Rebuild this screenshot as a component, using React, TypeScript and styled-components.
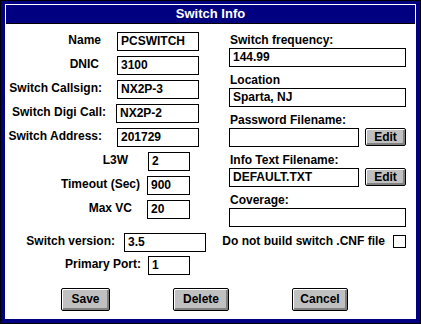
import React from "react";
import styled, { createGlobalStyle } from "styled-components";

const Global = createGlobalStyle`
  html, body { margin: 0; padding: 0; background: #ffffff; }
  body { font-family: "Liberation Sans", Arial, sans-serif; }
  * { box-sizing: border-box; }
`;

const Window = styled.div`
  width: 421px;
  height: 324px;
  border: 1px solid #000;
  background: #000080;
  padding: 3px 4px 4px 4px;
  display: flex;
`;

const Frame = styled.div`
  flex: 1;
  border: 1px solid #fff;
  background: #fff;
  display: flex;
  flex-direction: column;
`;

const TitleBar = styled.div`
  height: 19px;
  background: #000080;
  border-bottom: 1px solid #000;
  color: #fff;
  font-weight: bold;
  font-size: 13px;
  line-height: 18px;
  text-align: center;
`;

const Body = styled.div`
  flex: 1;
  padding-top: 8px;
  display: flex;
  flex-direction: column;
  font-size: 12px;
  font-weight: bold;
  color: #000;
`;

const Top = styled.div`
  display: flex;
  height: 195px;
`;

const LeftCol = styled.div`
  width: 223px;
  display: flex;
  flex-direction: column;
  gap: 5px;
`;

const RightCol = styled.div`
  width: 177px;
  display: flex;
  flex-direction: column;
  gap: 5px;
`;

const Row = styled.div<{ $mt?: number }>`
  display: flex;
  align-items: flex-start;
  height: 19px;
  margin-top: ${(p) => p.$mt ?? 0}px;
`;

const Label = styled.div<{ $w: number; $gap: number }>`
  width: ${(p) => p.$w}px;
  margin-right: ${(p) => p.$gap}px;
  text-align: right;
  line-height: 16px;
  white-space: nowrap;
`;

const Field = styled.div<{ $w?: number }>`
  width: ${(p) => (p.$w ? `${p.$w}px` : "100%")};
  height: 19px;
  border: 1px solid #000;
  background: #fff;
  padding-left: 3px;
  line-height: 17px;
  white-space: nowrap;
  overflow: hidden;
`;

const Group = styled.div`
  display: flex;
  flex-direction: column;
`;

const GroupLabel = styled.div`
  line-height: 16px;
  padding-left: 1px;
  white-space: nowrap;
`;

const FieldRow = styled.div`
  display: flex;
  justify-content: space-between;
  align-items: flex-start;
`;

const Button = styled.div<{ $w: number; $h: number }>`
  width: ${(p) => p.$w}px;
  height: ${(p) => p.$h}px;
  border: 1px solid #000;
  border-radius: 2px;
  background: #c0c0c0;
  box-shadow: inset 1px 1px 0 #fff, inset -2px -2px 0 #808080;
  display: flex;
  align-items: center;
  justify-content: center;
  padding-bottom: 1px;
  font-weight: bold;
  font-size: 12px;
`;

const CheckPart = styled.div`
  flex: 1;
  display: flex;
  justify-content: flex-end;
  align-items: flex-start;
  gap: 8px;
  padding-right: 9px;
  line-height: 16px;
  white-space: nowrap;
`;

const Check = styled.div`
  width: 13px;
  height: 13px;
  border: 1px solid #000;
  background: #fff;
  margin-top: 2px;
`;

const LeftPart = styled.div`
  width: 216px;
  display: flex;
  align-items: flex-start;
`;

const Buttons = styled.div`
  display: flex;
  margin-top: 13px;
  padding-left: 55px;
  gap: 63px;
`;

type LRow = { label: string; lw: number; gap: number; iw: number; value: string };

const leftRows: LRow[] = [
  { label: "Name", lw: 95, gap: 16, iw: 82, value: "PCSWITCH" },
  { label: "DNIC", lw: 93, gap: 18, iw: 82, value: "3100" },
  { label: "Switch Callsign:", lw: 96, gap: 15, iw: 82, value: "NX2P-3" },
  { label: "Switch Digi Call:", lw: 100, gap: 10, iw: 83, value: "NX2P-2" },
  { label: "Switch Address:", lw: 96, gap: 15, iw: 82, value: "201729" },
  { label: "L3W", lw: 122, gap: 20, iw: 42, value: "2" },
  { label: "Timeout (Sec)", lw: 134, gap: 7, iw: 43, value: "900" },
  { label: "Max VC", lw: 126, gap: 15, iw: 43, value: "20" },
];

const rightGroups: { label: string; value: string; edit?: boolean }[] = [
  { label: "Switch frequency:", value: "144.99" },
  { label: "Location", value: "Sparta, NJ" },
  { label: "Password Filename:", value: "", edit: true },
  { label: "Info Text Filename:", value: "DEFAULT.TXT", edit: true },
  { label: "Coverage:", value: "" },
];

export default function App() {
  return (
    <>
      <Global />
      <Window>
        <Frame>
          <TitleBar>Switch Info</TitleBar>
          <Body>
            <Top>
              <LeftCol>
                {leftRows.map((r) => (
                  <Row key={r.label}>
                    <Label $w={r.lw} $gap={r.gap}>{r.label}</Label>
                    <Field $w={r.iw}>{r.value}</Field>
                  </Row>
                ))}
              </LeftCol>
              <RightCol>
                {rightGroups.map((g) => (
                  <Group key={g.label}>
                    <GroupLabel>{g.label}</GroupLabel>
                    {g.edit ? (
                      <FieldRow>
                        <Field $w={130}>{g.value}</Field>
                        <Button $w={41} $h={18}>Edit</Button>
                      </FieldRow>
                    ) : (
                      <Field>{g.value}</Field>
                    )}
                  </Group>
                ))}
              </RightCol>
            </Top>
            <Row $mt={6}>
              <LeftPart>
                <Label $w={109} $gap={9}>Switch version:</Label>
                <Field $w={82}>3.5</Field>
              </LeftPart>
              <CheckPart>
                <span>Do not build switch .CNF file</span>
                <Check />
              </CheckPart>
            </Row>
            <Row $mt={4}>
              <Label $w={135} $gap={7}>Primary Port:</Label>
              <Field $w={42}>1</Field>
            </Row>
            <Buttons>
              <Button $w={49} $h={23}>Save</Button>
              <Button $w={56} $h={23}>Delete</Button>
              <Button $w={56} $h={23}>Cancel</Button>
            </Buttons>
          </Body>
        </Frame>
      </Window>
    </>
  );
}
